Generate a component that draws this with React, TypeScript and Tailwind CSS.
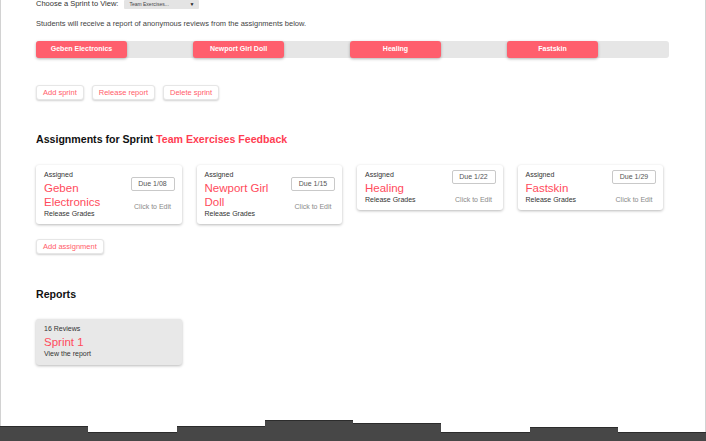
const PINK = 'text-[#ff4b5c]';

const sprints = ['Geben Electronics', 'Newport Girl Doll', 'Healing', 'Fastskin'];

const assignments = [
  { title: 'Geben Electronics', due: 'Due 1/08' },
  { title: 'Newport Girl Doll', due: 'Due 1/15' },
  { title: 'Healing', due: 'Due 1/22' },
  { title: 'Fastskin', due: 'Due 1/29' },
];

// dark strip at the bottom of the capture, 8 equal steps
const steps = [15, 9, 15, 21, 18, 9, 14, 9];

function OutlineButton({ label }: { label: string }) {
  return (
    <button className="h-[15px] px-[6px] rounded-[3px] border border-[#e6e6e6] bg-white shadow-[0_1px_2px_rgba(0,0,0,0.18)] text-[7.5px] leading-[13px] text-[#ff5c6a]">
      {label}
    </button>
  );
}

function AssignmentCard({ title, due }: { title: string; due: string }) {
  return (
    <div className="flex rounded-[3px] bg-white shadow-[0_1px_3px_rgba(0,0,0,0.28)] pl-[8px] pr-[7px] pt-[5px] pb-[6px]">
      <div className="flex-1 min-w-0">
        <div className="text-[7px] leading-[9px] text-[#333]">Assigned</div>
        <div className={`mt-[2px] text-[11.5px] leading-[14px] ${PINK}`}>{title}</div>
        <div className="text-[7px] leading-[9px] text-[#333]">Release Grades</div>
      </div>
      <div className="flex flex-col items-center justify-center">
        <div className="w-[44px] h-[14px] rounded-[2px] border border-[#c9c9c9] text-center text-[7px] leading-[12px] text-[#555]">
          {due}
        </div>
        <div className="mt-[11px] text-[7px] leading-[9px] text-[#8a8a8a] whitespace-nowrap">Click to Edit</div>
      </div>
    </div>
  );
}

export default function App() {
  return (
    <div
      className="relative w-[706px] h-[441px] overflow-hidden bg-white"
      style={{ fontFamily: '"Liberation Sans", Arial, sans-serif' }}
    >
      <div className="h-full border-l border-r border-[#d2d2d2] pl-[35px]">
        <div className="flex items-start h-[9px]">
          <span className="-mt-[1px] text-[7.5px] leading-[9px] text-[#333]">Choose a Sprint to View:</span>
          <div className="ml-[6px] w-[75px] h-[9px] bg-[#e4e4e4] rounded-[1px] flex items-center justify-between px-[5px]">
            <span className="text-[5px] leading-[9px] text-[#444]">Team Exercises...</span>
            <span className="text-[5px] leading-[9px] text-[#222]">▼</span>
          </div>
        </div>

        <div className="mt-[10px] text-[7.5px] leading-[10px] text-[#444]">
          Students will receive a report of anonymous reviews from the assignments below.
        </div>

        <div className="mt-[12px] w-[633px] h-[17px] rounded-[3px] bg-[#e6e6e6] flex gap-[66px]">
          {sprints.map((s) => (
            <div
              key={s}
              className="w-[91px] h-[17px] rounded-[3px] bg-[#ff5f6d] shadow-[0_1px_3px_rgba(0,0,0,0.3)] flex items-center justify-center text-[7px] font-bold text-white"
            >
              {s}
            </div>
          ))}
        </div>

        <div className="mt-[27px] flex gap-[8px]">
          <OutlineButton label="Add sprint" />
          <OutlineButton label="Release report" />
          <OutlineButton label="Delete sprint" />
        </div>

        <h2 className="mt-[32px] text-[10.6px] leading-[14px] font-bold text-[#111]">
          Assignments for Sprint <span className="text-[#ff3d52]">Team Exercises Feedback</span>
        </h2>

        <div className="mt-[19px] w-[627px] grid grid-cols-4 gap-x-[15px] items-start">
          {assignments.map((a) => (
            <AssignmentCard key={a.title} title={a.title} due={a.due} />
          ))}
        </div>

        <div className="mt-[15px] flex">
          <OutlineButton label="Add assignment" />
        </div>

        <h2 className="mt-[33px] text-[10.6px] leading-[14px] font-bold text-[#111]">Reports</h2>

        <div className="mt-[18px] w-[146px] rounded-[3px] bg-[#e8e8e8] shadow-[0_1px_3px_rgba(0,0,0,0.28)] pl-[8px] pt-[5px] pb-[7px]">
          <div className="text-[7px] leading-[9px] text-[#333]">16 Reviews</div>
          <div className={`mt-[2px] text-[11.5px] leading-[14px] ${PINK}`}>Sprint 1</div>
          <div className="text-[7px] leading-[9px] text-[#333]">View the report</div>
        </div>
      </div>

      <div className="absolute inset-x-0 bottom-0 flex items-end">
        {steps.map((h, i) => (
          <div key={i} className="flex-1 bg-[#474747] border-t border-[#2c2c2c]" style={{ height: h }} />
        ))}
      </div>
    </div>
  );
}
